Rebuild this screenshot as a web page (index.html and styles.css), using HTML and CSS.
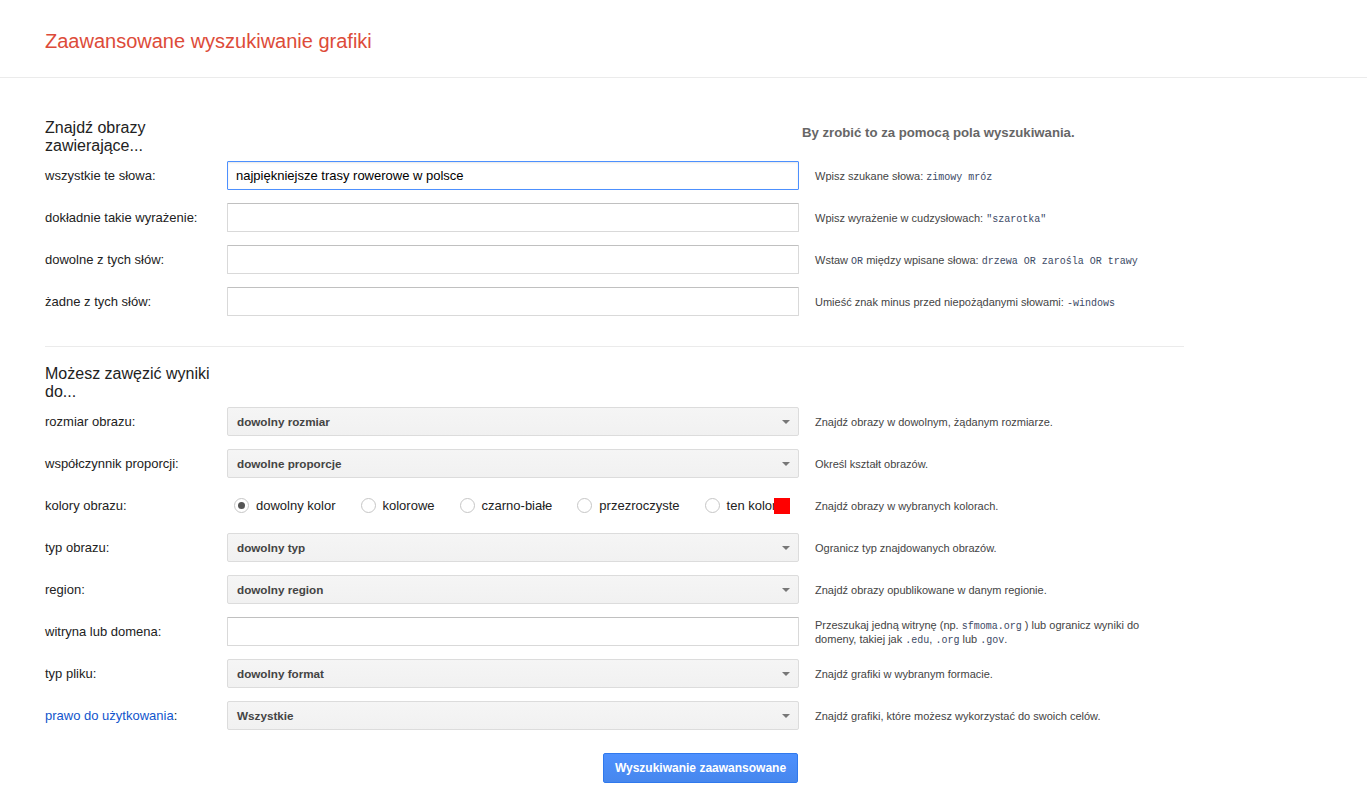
FILE: index.html
```html
<!DOCTYPE html>
<html lang="pl">
<head>
  <meta charset="UTF-8">
  <title>Zaawansowane wyszukiwanie grafiki</title>
  <link rel="stylesheet" href="styles.css">
</head>
<body>

  <div class="header">
    <h1>Zaawansowane wyszukiwanie grafiki</h1>
  </div>

  <form class="content">

    <div class="section">
      <div class="section-head">
        <h2>Znajdź obrazy zawierające...</h2>
        <div class="section-tip">By zrobić to za pomocą pola wyszukiwania.</div>
      </div>

      <div class="row">
        <label class="label">wszystkie te słowa:</label>
        <div class="field"><input class="text focused" type="text" value="najpiękniejsze trasy rowerowe w polsce"></div>
        <div class="hint">Wpisz szukane słowa: <span class="code">zimowy mróz</span></div>
      </div>
      <div class="row">
        <label class="label">dokładnie takie wyrażenie:</label>
        <div class="field"><input class="text" type="text"></div>
        <div class="hint">Wpisz wyrażenie w cudzysłowach: <span class="code">"szarotka"</span></div>
      </div>
      <div class="row">
        <label class="label">dowolne z tych słów:</label>
        <div class="field"><input class="text" type="text"></div>
        <div class="hint">Wstaw <span class="code">OR</span> między wpisane słowa: <span class="code">drzewa OR zarośla OR trawy</span></div>
      </div>
      <div class="row">
        <label class="label">żadne z tych słów:</label>
        <div class="field"><input class="text" type="text"></div>
        <div class="hint">Umieść znak minus przed niepożądanymi słowami: <span class="code">-windows</span></div>
      </div>
    </div>

    <div class="section second">
      <div class="section-head">
        <h2>Możesz zawęzić wyniki do...</h2>
      </div>

      <div class="row">
        <label class="label">rozmiar obrazu:</label>
        <div class="field"><div class="select">dowolny rozmiar</div></div>
        <div class="hint">Znajdź obrazy w dowolnym, żądanym rozmiarze.</div>
      </div>
      <div class="row">
        <label class="label">współczynnik proporcji:</label>
        <div class="field"><div class="select">dowolne proporcje</div></div>
        <div class="hint">Określ kształt obrazów.</div>
      </div>
      <div class="row">
        <label class="label">kolory obrazu:</label>
        <div class="field radios">
          <label class="radio"><input type="radio" name="color" checked> dowolny kolor</label>
          <label class="radio"><input type="radio" name="color"> kolorowe</label>
          <label class="radio"><input type="radio" name="color"> czarno-białe</label>
          <label class="radio"><input type="radio" name="color"> przezroczyste</label>
          <label class="radio"><input type="radio" name="color"> ten kolor<span class="swatch"></span></label>
        </div>
        <div class="hint">Znajdź obrazy w wybranych kolorach.</div>
      </div>
      <div class="row">
        <label class="label">typ obrazu:</label>
        <div class="field"><div class="select">dowolny typ</div></div>
        <div class="hint">Ogranicz typ znajdowanych obrazów.</div>
      </div>
      <div class="row">
        <label class="label">region:</label>
        <div class="field"><div class="select">dowolny region</div></div>
        <div class="hint">Znajdź obrazy opublikowane w danym regionie.</div>
      </div>
      <div class="row">
        <label class="label">witryna lub domena:</label>
        <div class="field"><input class="text" type="text"></div>
        <div class="hint">Przeszukaj jedną witrynę (np. <span class="code">sfmoma.org</span> ) lub ogranicz wyniki do domeny, takiej jak <span class="code">.edu</span>, <span class="code">.org</span> lub <span class="code">.gov</span>.</div>
      </div>
      <div class="row">
        <label class="label">typ pliku:</label>
        <div class="field"><div class="select">dowolny format</div></div>
        <div class="hint">Znajdź grafiki w wybranym formacie.</div>
      </div>
      <div class="row">
        <label class="label"><a href="#">prawo do użytkowania</a>:</label>
        <div class="field"><div class="select">Wszystkie</div></div>
        <div class="hint">Znajdź grafiki, które możesz wykorzystać do swoich celów.</div>
      </div>
    </div>

    <div class="actions">
      <button type="button" class="btn">Wyszukiwanie zaawansowane</button>
    </div>

  </form>

</body>
</html>
```

FILE: styles.css
```css
body {
  font-family: "Liberation Sans", Arial, sans-serif;
  margin: 0;
  color: #222;
  background: #fff;
}
/* Page header */
.header {
  padding: 29px 45px 24px;
  border-bottom: 1px solid #ebebeb;
}
.header h1 {
  margin: 0;
  font-size: 20px;
  line-height: 24px;
  font-weight: normal;
  color: #dd4b39;
}
/* Form body */
.content {
  width: 1139px;
  margin: 0 0 0 45px;
  padding-top: 41px;
}
.section-head {
  display: flex;
  margin-bottom: 6px;
}
.section-head h2 {
  width: 180px;
  margin: 0;
  font-size: 16px;
  line-height: 18px;
  font-weight: normal;
  color: #222;
}
.section-tip {
  margin: 6px 0 0 577px;
  font-size: 13.2px;
  line-height: 16px;
  font-weight: bold;
  color: #666;
}
.section.second {
  margin-top: 30px;
  padding-top: 18px;
  border-top: 1px solid #ebebeb;
}
/* One form row: label, control, hint */
.row {
  display: flex;
  align-items: center;
  height: 29px;
  margin-bottom: 13px;
}
.row:last-child {
  margin-bottom: 0;
}
.label {
  width: 182px;
  flex-shrink: 0;
  font-size: 13px;
  color: #222;
}
.label a {
  color: #1155cc;
  text-decoration: none;
}
.field {
  width: 572px;
  height: 29px;
  flex-shrink: 0;
}
.hint {
  width: 335px;
  margin-left: 16px;
  font-size: 11px;
  line-height: 14px;
  color: #444;
}
.code {
  font-family: "Liberation Mono", "DejaVu Sans Mono", monospace;
  font-size: 10px;
  line-height: 1;
  color: #3c4a66;
}
/* Text inputs */
.text {
  box-sizing: border-box;
  width: 100%;
  height: 29px;
  margin: 0;
  padding: 0 8px;
  border: 1px solid #d9d9d9;
  border-top-color: #c0c0c0;
  border-radius: 1px;
  font-family: inherit;
  font-size: 13px;
  color: #000;
  outline: none;
}
.text.focused {
  border: 1px solid #4d90fe;
  box-shadow: inset 0 1px 2px rgba(0, 0, 0, 0.1);
}
/* Drop-down buttons */
.select {
  position: relative;
  box-sizing: border-box;
  height: 29px;
  padding: 0 9px;
  border: 1px solid #dcdcdc;
  border-radius: 2px;
  background: linear-gradient(#f5f5f5, #f1f1f1);
  font-size: 11.7px;
  font-weight: bold;
  line-height: 27px;
  color: #444;
}
.select::after {
  content: "";
  position: absolute;
  right: 8px;
  top: 12px;
  border-left: 4px solid transparent;
  border-right: 4px solid transparent;
  border-top: 4px solid #777;
}
/* Colour radios */
.radios {
  display: flex;
  align-items: center;
  padding-left: 7px;
  box-sizing: border-box;
}
.radio {
  display: flex;
  align-items: center;
  flex-shrink: 0;
  white-space: nowrap;
  margin-right: 25px;
  font-size: 13px;
  color: #222;
}
.radio input {
  appearance: none;
  -webkit-appearance: none;
  box-sizing: border-box;
  width: 15px;
  height: 15px;
  margin: 0 7px 0 0;
  border: 1px solid #c6c6c6;
  border-radius: 50%;
  background: #fff;
  display: inline-grid;
  place-content: center;
}
.radio input:checked::before {
  content: "";
  width: 7px;
  height: 7px;
  border-radius: 50%;
  background: #555;
}
.swatch {
  display: inline-block;
  width: 16px;
  height: 16px;
  margin-left: -2px;
  background: #f00;
}
/* Submit */
.actions {
  display: flex;
  justify-content: flex-end;
  width: 753px;
  margin-top: 23px;
}
.btn {
  width: 195px;
  height: 30px;
  border: 1px solid #3079ed;
  border-radius: 2px;
  background: linear-gradient(#4d90fe, #4787ed);
  font-family: inherit;
  font-size: 12px;
  font-weight: bold;
  color: #fff;
  cursor: pointer;
}
```
